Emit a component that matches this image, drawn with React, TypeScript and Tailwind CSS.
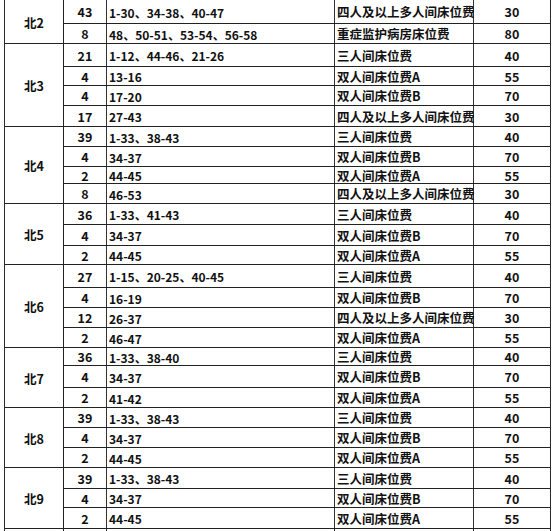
type Row = [string, string, string, string, number];

const groups: { name: string; rows: Row[] }[] = [
  {
    name: "北2",
    rows: [
      ["43", "1-30、34-38、40-47", "四人及以上多人间床位费", "30", 24],
      ["8", "48、50-51、53-54、56-58", "重症监护病房床位费", "80", 20],
    ],
  },
  {
    name: "北3",
    rows: [
      ["21", "1-12、44-46、21-26", "三人间床位费", "40", 23],
      ["4", "13-16", "双人间床位费A", "55", 19],
      ["4", "17-20", "双人间床位费B", "70", 20],
      ["17", "27-43", "四人及以上多人间床位费", "30", 21],
    ],
  },
  {
    name: "北4",
    rows: [
      ["39", "1-33、38-43", "三人间床位费", "40", 20],
      ["4", "34-37", "双人间床位费B", "70", 20],
      ["2", "44-45", "双人间床位费A", "55", 17],
      ["8", "46-53", "四人及以上多人间床位费", "30", 20],
    ],
  },
  {
    name: "北5",
    rows: [
      ["36", "1-33、41-43", "三人间床位费", "40", 21],
      ["4", "34-37", "双人间床位费B", "70", 21],
      ["2", "44-45", "双人间床位费A", "55", 19],
    ],
  },
  {
    name: "北6",
    rows: [
      ["27", "1-15、20-25、40-45", "三人间床位费", "40", 23],
      ["4", "16-19", "双人间床位费B", "70", 20],
      ["12", "26-37", "四人及以上多人间床位费", "30", 20],
      ["2", "46-47", "双人间床位费A", "55", 20],
    ],
  },
  {
    name: "北7",
    rows: [
      ["36", "1-33、38-40", "三人间床位费", "40", 18],
      ["4", "34-37", "双人间床位费B", "70", 22],
      ["2", "41-42", "双人间床位费A", "55", 20],
    ],
  },
  {
    name: "北8",
    rows: [
      ["39", "1-33、38-43", "三人间床位费", "40", 20],
      ["4", "34-37", "双人间床位费B", "70", 20],
      ["2", "44-45", "双人间床位费A", "55", 20],
    ],
  },
  {
    name: "北9",
    rows: [
      ["39", "1-33、38-43", "三人间床位费", "40", 21],
      ["4", "34-37", "双人间床位费B", "70", 19],
      ["2", "44-45", "双人间床位费A", "55", 21],
    ],
  },
];

export default function App() {
  return (
    <div
      className="h-[531px] w-[553px] overflow-hidden bg-white pl-[4px] text-[12.5px] font-bold text-[#111]"
      style={{ fontFamily: '"Noto Sans CJK SC", "Noto Sans", sans-serif' }}
    >
      <div className="w-[547px] border-x border-[#2a2a2a]">
        {groups.map((g) => (
          <div key={g.name} className="flex">
            <div className="flex w-[59px] items-center justify-center border-r border-b border-[#222] pt-[3px]">
              {g.name}
            </div>
            <div className="flex flex-1 flex-col">
              {g.rows.map((r, i) => (
                <div
                  key={i}
                  className="flex border-b border-[#222]"
                  style={{ height: r[4] }}
                >
                  <div className="flex w-[43px] items-center justify-center border-r border-[#333] pt-[2px]">
                    {r[0]}
                  </div>
                  <div className="flex w-[228px] items-center border-r border-[#333] pl-[2px] pt-[2px] text-[12px] whitespace-nowrap">
                    {r[1]}
                  </div>
                  <div className="flex w-[139px] items-center overflow-visible border-r border-[#333] pl-[2px] pt-[2px] whitespace-nowrap">
                    {r[2]}
                  </div>
                  <div className="flex flex-1 items-center justify-center pt-[2px]">
                    {r[3]}
                  </div>
                </div>
              ))}
            </div>
          </div>
        ))}
        <div className="flex h-[20px]">
          <div className="w-[59px] border-r border-[#222]" />
          <div className="w-[43px] border-r border-[#333]" />
          <div className="w-[228px] border-r border-[#333]" />
          <div className="w-[139px] border-r border-[#333]" />
          <div className="flex-1" />
        </div>
      </div>
    </div>
  );
}
